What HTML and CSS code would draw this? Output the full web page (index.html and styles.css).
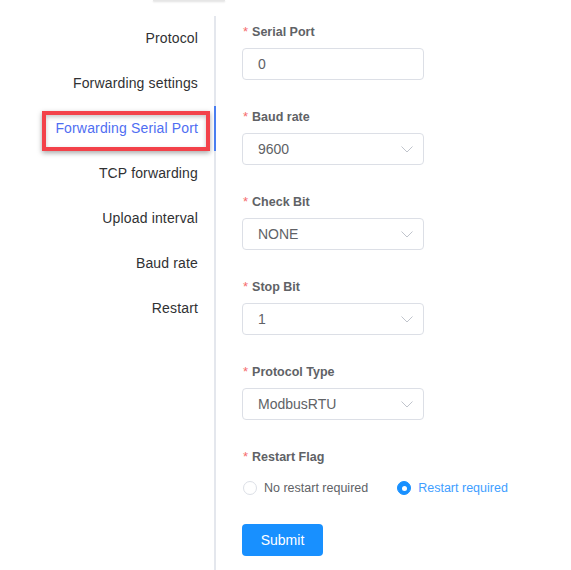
FILE: index.html
```html
<!DOCTYPE html>
<html>
<head>
<meta charset="utf-8">
<link rel="stylesheet" href="styles.css">
</head>
<body>
<div class="topbar"></div>
<div class="layout">
  <nav class="tabs">
    <div class="tab">Protocol</div>
    <div class="tab">Forwarding settings</div>
    <div class="tab active">Forwarding Serial Port<span class="mark"></span></div>
    <div class="tab">TCP forwarding</div>
    <div class="tab">Upload interval</div>
    <div class="tab">Baud rate</div>
    <div class="tab">Restart</div>
  </nav>
  <form class="form">
    <div class="group">
      <div class="label"><span class="req">*</span>Serial Port</div>
      <div class="input">0</div>
    </div>
    <div class="group">
      <div class="label"><span class="req">*</span>Baud rate</div>
      <div class="input select">9600<svg class="arrow" width="12" height="7" viewBox="0 0 12 7"><path d="M0.5 0.5 L6 6 L11.5 0.5" fill="none" stroke="#c0c4cc" stroke-width="1"/></svg></div>
    </div>
    <div class="group">
      <div class="label"><span class="req">*</span>Check Bit</div>
      <div class="input select">NONE<svg class="arrow" width="12" height="7" viewBox="0 0 12 7"><path d="M0.5 0.5 L6 6 L11.5 0.5" fill="none" stroke="#c0c4cc" stroke-width="1"/></svg></div>
    </div>
    <div class="group">
      <div class="label"><span class="req">*</span>Stop Bit</div>
      <div class="input select">1<svg class="arrow" width="12" height="7" viewBox="0 0 12 7"><path d="M0.5 0.5 L6 6 L11.5 0.5" fill="none" stroke="#c0c4cc" stroke-width="1"/></svg></div>
    </div>
    <div class="group">
      <div class="label"><span class="req">*</span>Protocol Type</div>
      <div class="input select">ModbusRTU<svg class="arrow" width="12" height="7" viewBox="0 0 12 7"><path d="M0.5 0.5 L6 6 L11.5 0.5" fill="none" stroke="#c0c4cc" stroke-width="1"/></svg></div>
    </div>
    <div class="group last">
      <div class="label"><span class="req">*</span>Restart Flag</div>
      <div class="radios">
        <div class="radio"><span class="dot"></span>No restart required</div>
        <div class="radio checked"><span class="dot"></span>Restart required</div>
      </div>
    </div>
    <div class="btn">Submit</div>
  </form>
</div>
</body>
</html>
```

FILE: styles.css
```css
html, body {
  margin: 0;
  padding: 0;
  background: #ffffff;
  font-family: "Liberation Sans", Arial, sans-serif;
  font-size: 14px;
}
.topbar {
  width: 72px;
  height: 1px;
  margin-left: 153px;
  background: #e6e6e6;
  box-shadow: 0 1px 2px rgba(0, 0, 0, 0.18);
}
.layout {
  display: flex;
  margin-top: 15px;
}
.tabs {
  width: 214px;
  border-right: 2px solid #e4e7ed;
  min-height: 560px;
  flex: none;
}
.tab {
  position: relative;
  height: 45px;
  line-height: 45px;
  text-align: right;
  padding-right: 16px;
  color: #303133;
  font-size: 14px;
  letter-spacing: 0.15px;
}
.tab.active {
  color: #4f6ef2;
}
.tab.active::after {
  content: "";
  position: absolute;
  right: -2px;
  top: 0;
  width: 2px;
  height: 45px;
  background: #4a7ef0;
}
.mark {
  position: absolute;
  left: 42px;
  top: 5px;
  width: 160px;
  height: 32px;
  border: 4px solid #f3424a;
  box-shadow: 0 2px 5px rgba(0, 0, 0, 0.35), inset 0 2px 4px rgba(0, 0, 0, 0.22);
}
.form {
  padding-left: 26px;
  padding-top: 6px;
  display: flex;
  flex-direction: column;
}
.group {
  display: flex;
  flex-direction: column;
  margin-bottom: 27px;
}
.group.last {
  margin-bottom: 21px;
}
.label {
  height: 20px;
  line-height: 20px;
  color: #606266;
  font-weight: bold;
  font-size: 12.5px;
  margin-bottom: 6px;
}
.req {
  color: #f56c6c;
  font-weight: normal;
  font-size: 13px;
  margin-left: 1px;
  margin-right: 4px;
}
.input {
  box-sizing: border-box;
  width: 182px;
  height: 32px;
  border: 1px solid #dcdfe6;
  border-radius: 4px;
  padding-left: 15px;
  line-height: 30px;
  color: #606266;
  font-size: 14px;
  display: flex;
  align-items: center;
  justify-content: space-between;
  padding-right: 10px;
}
.arrow {
  display: block;
}
.radios {
  display: flex;
  height: 30px;
  align-items: center;
  gap: 28px;
}
.radio {
  display: flex;
  align-items: center;
  color: #606266;
  font-size: 12.5px;
}
.dot {
  box-sizing: border-box;
  width: 14px;
  height: 14px;
  border-radius: 50%;
  border: 1px solid #dcdfe6;
  margin-left: 1px;
  margin-right: 7px;
  background: #fff;
}
.radio.checked {
  color: #409eff;
}
.radio.checked .dot {
  background: #1890ff;
  border-color: #1890ff;
  display: flex;
  align-items: center;
  justify-content: center;
}
.radio.checked .dot::after {
  content: "";
  width: 5px;
  height: 5px;
  border-radius: 50%;
  background: #fff;
}
.btn {
  width: 81px;
  height: 32px;
  line-height: 32px;
  text-align: center;
  background: #1890ff;
  color: #fff;
  border-radius: 4px;
  font-size: 14px;
}
```
